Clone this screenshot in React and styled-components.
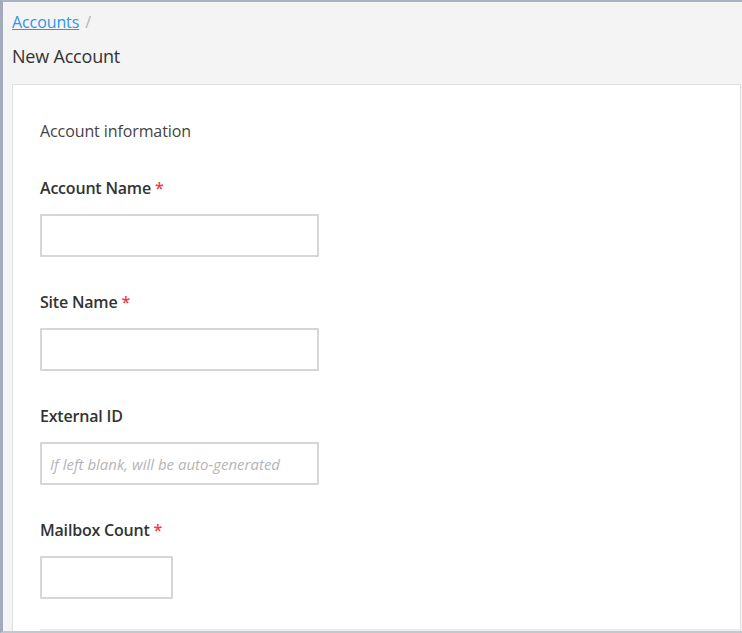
import React from "react";
import styled, { createGlobalStyle } from "styled-components";

const Global = createGlobalStyle`
  html, body { margin: 0; padding: 0; background: #ffffff; }
  body { font-family: "Open Sans", "Noto Sans", sans-serif; color: #333; }
  * { box-sizing: border-box; }
`;

const Frame = styled.div`
  height: 633px;
  border-left: 3px solid #a2abbb;
  border-top: 2px solid #a9b2c0;
  border-bottom: 2px solid #c3c8d0;
  background: #f4f4f4;
  display: flex;
  flex-direction: column;
  overflow: hidden;
`;

const Header = styled.header`
  flex-shrink: 0;
  padding: 10px 9px 0;
  height: 82px;
  display: flex;
  flex-direction: column;
`;

const Crumbs = styled.div`
  font-size: 16px;
  line-height: 20px;
  letter-spacing: -0.1px;
  color: #b5b5b5;
  display: flex;
  gap: 6px;
`;

const CrumbLink = styled.a`
  color: #2f95ea;
  text-decoration: underline;
  cursor: pointer;
`;

const Title = styled.h1`
  margin: 12px 0 0;
  font-size: 18px;
  font-weight: 400;
  line-height: 24px;
  letter-spacing: -0.2px;
  color: #333;
`;

const Panel = styled.section`
  flex: 1;
  min-height: 0;
  margin-left: 9px;
  margin-right: 1px;
  background: #fff;
  border: 1px solid #e0e0e0;
  border-bottom: none;
  padding: 36px 0 0 27px;
`;

const SectionTitle = styled.div`
  font-size: 16px;
  line-height: 20px;
  letter-spacing: -0.1px;
  color: #444;
`;

const Field = styled.div`
  margin-top: ${(p) => p.$top}px;
  display: flex;
  flex-direction: column;
  align-items: flex-start;
`;

const Label = styled.label`
  font-size: 16px;
  font-weight: 600;
  line-height: 20px;
  letter-spacing: -0.2px;
  color: #333;
`;

const Req = styled.span`
  color: #f0384a;
  margin-left: 4px;
`;

const Input = styled.input`
  margin-top: 16px;
  width: ${(p) => p.$w}px;
  height: 43px;
  border: 2px solid #d6d6d6;
  border-radius: 1px;
  background: #fff;
  padding: 0 8px;
  font-family: "Open Sans", sans-serif;
  font-size: 15px;
  outline: none;
  &::placeholder {
    color: #b5b5b5;
    font-style: italic;
  }
`;

const Divider = styled.hr`
  margin: 30px 0 0;
  border: none;
  border-top: 2px solid #ececec;
`;

const fields = [
  { label: "Account Name", req: true, w: 279, top: 37 },
  { label: "Site Name", req: true, w: 279, top: 35 },
  { label: "External ID", req: false, w: 279, top: 35, ph: "If left blank, will be auto-generated" },
  { label: "Mailbox Count", req: true, w: 133, top: 35 },
];

export default function App() {
  return (
    <>
      <Global />
      <Frame>
        <Header>
          <Crumbs>
            <CrumbLink>Accounts</CrumbLink>
            <span>/</span>
          </Crumbs>
          <Title>New Account</Title>
        </Header>
        <Panel>
          <SectionTitle>Account information</SectionTitle>
          {fields.map((f) => (
            <Field key={f.label} $top={f.top}>
              <Label>
                {f.label}
                {f.req && <Req>*</Req>}
              </Label>
              <Input $w={f.w} placeholder={f.ph || ""} />
            </Field>
          ))}
          <Divider />
        </Panel>
      </Frame>
    </>
  );
}
